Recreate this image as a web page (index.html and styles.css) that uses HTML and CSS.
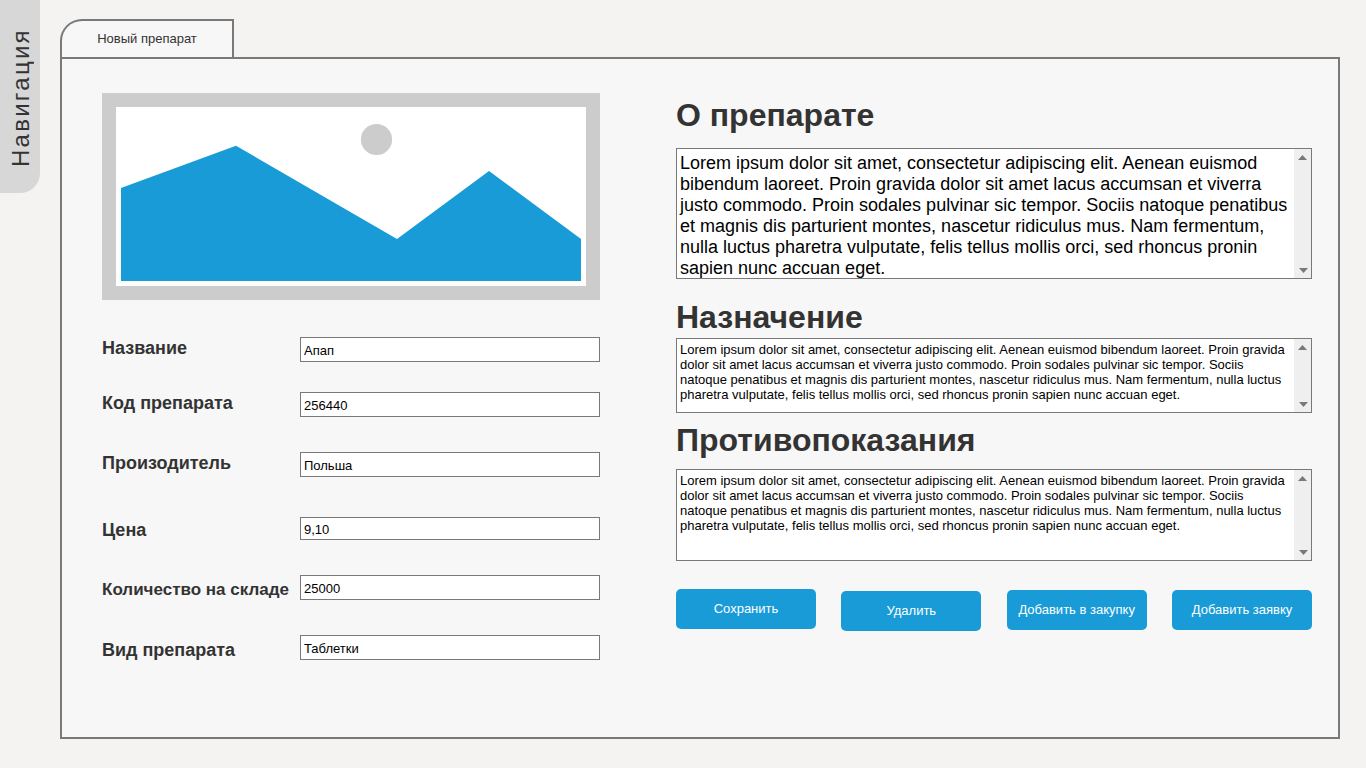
FILE: index.html
```html
<!DOCTYPE html>
<html lang="ru">
<head>
<meta charset="utf-8">
<title>Новый препарат</title>
<link rel="stylesheet" href="styles.css">
</head>
<body>
<div class="app">
  <nav class="side-tab"><span class="side-label">Навигация</span></nav>
  <main class="content">
    <div class="tab">Новый препарат</div>
    <div class="panel">
      <section class="left">
        <svg class="picture" width="498" height="207" viewBox="0 0 498 207">
          <rect width="498" height="207" fill="#ccc"/>
          <rect x="14" y="14" width="470" height="179" fill="#fff"/>
          <circle cx="274.5" cy="46.5" r="15.6" fill="#ccc"/>
          <path d="M19 95L134 52.7L295 146L387 78L479 146V188H19Z" fill="#189bd7"/>
        </svg>
        <div class="row name"><label>Название</label><div class="field">Апап</div></div>
        <div class="row code"><label>Код препарата</label><div class="field">256440</div></div>
        <div class="row maker"><label>Произодитель</label><div class="field">Польша</div></div>
        <div class="row price"><label>Цена</label><div class="field">9,10</div></div>
        <div class="row stock"><label>Количество на складе</label><div class="field">25000</div></div>
        <div class="row kind"><label>Вид препарата</label><div class="field">Таблетки</div></div>
      </section>
      <section class="right">
        <h2 class="h-about">О препарате</h2>
        <div class="area about">
          <p>Lorem ipsum dolor sit amet, consectetur adipiscing elit. Aenean euismod bibendum laoreet. Proin gravida dolor sit amet lacus accumsan et viverra justo commodo. Proin sodales pulvinar sic tempor. Sociis natoque penatibus et magnis dis parturient montes, nascetur ridiculus mus. Nam fermentum, nulla luctus pharetra vulputate, felis tellus mollis orci, sed rhoncus pronin sapien nunc accuan eget.</p>
          <div class="bar"><i class="up"></i><i class="down"></i></div>
        </div>
        <h2 class="h-purpose">Назначение</h2>
        <div class="area purpose">
          <p>Lorem ipsum dolor sit amet, consectetur adipiscing elit. Aenean euismod bibendum laoreet. Proin gravida dolor sit amet lacus accumsan et viverra justo commodo. Proin sodales pulvinar sic tempor. Sociis natoque penatibus et magnis dis parturient montes, nascetur ridiculus mus. Nam fermentum, nulla luctus pharetra vulputate, felis tellus mollis orci, sed rhoncus pronin sapien nunc accuan eget.</p>
          <div class="bar"><i class="up"></i><i class="down"></i></div>
        </div>
        <h2 class="h-contra">Противопоказания</h2>
        <div class="area contra">
          <p>Lorem ipsum dolor sit amet, consectetur adipiscing elit. Aenean euismod bibendum laoreet. Proin gravida dolor sit amet lacus accumsan et viverra justo commodo. Proin sodales pulvinar sic tempor. Sociis natoque penatibus et magnis dis parturient montes, nascetur ridiculus mus. Nam fermentum, nulla luctus pharetra vulputate, felis tellus mollis orci, sed rhoncus pronin sapien nunc accuan eget.</p>
          <div class="bar"><i class="up"></i><i class="down"></i></div>
        </div>
        <div class="actions">
          <button class="btn save">Сохранить</button>
          <button class="btn remove">Удалить</button>
          <button class="btn">Добавить в закупку</button>
          <button class="btn">Добавить заявку</button>
        </div>
      </section>
    </div>
  </main>
</div>
</body>
</html>
```
FILE: styles.css
```css
* { box-sizing: border-box; }
body {
  margin: 0;
  height: 768px;
  overflow: hidden;
  background: #f4f3f1;
  color: #333;
  font: 13px/15px "Liberation Sans", Arial, sans-serif;
}
.app { display: flex; align-items: flex-start; gap: 20px; }
.side-tab {
  width: 40px;
  height: 193px;
  padding: 28px 0 0 7px;
  background: #d7d7d7;
  border-radius: 0 0 20px 0;
}
.side-label {
  display: block;
  writing-mode: vertical-rl;
  transform: rotate(180deg);
  width: 28px;
  height: 139px;
  font-size: 24px;
  line-height: 28px;
  letter-spacing: 2.25px;
  white-space: nowrap;
}
.content { width: 1280px; padding-top: 19px; }
.tab {
  width: 174px;
  height: 38px;
  border: 2px solid #797979;
  border-bottom: 0;
  border-radius: 22px 0 0 0;
  background: #f7f7f7;
  text-align: center;
  line-height: 36px;
}
.panel {
  display: flex;
  gap: 76px;
  height: 682px;
  padding: 34px 26px 0 40px;
  border: 2px solid #797979;
  background: #f7f7f7;
}
.left { width: 498px; }
.picture { display: block; margin-bottom: 37px; }
.row {
  display: grid;
  grid-template-columns: 198px 300px;
  grid-template-rows: 100%;
  height: 25px;
  margin-bottom: 35px;
}
.row label { font-size: 18px; font-weight: bold; line-height: 22px; white-space: nowrap; }
.row.name { margin-bottom: 30px; }
.row.maker { margin-bottom: 40px; }
.row.price { height: 23px; }
.price label { line-height: 26px; }
.row.stock label { font-size: 17px; line-height: 29px; }
.kind label { line-height: 30px; }
.row.price label { line-height: 26px; }
.row.kind label { line-height: 30px; }
.field {
  padding: 0 3px;
  border: 1px solid #797979;
  background: #fff;
  color: #000;
  line-height: 25px;
}
.price .field { line-height: 23px; }
.stock .field, .kind .field { line-height: 25px; }
.right { width: 636px; }
h2 { margin: 0; font-size: 32px; font-weight: bold; line-height: 36px; white-space: nowrap; }
.h-about { margin: 4px 0 15px; }
.h-purpose { margin: 20px 0 3px; }
.h-contra { margin: 9px 0 11px; }
.area {
  display: flex;
  justify-content: space-between;
  border: 1px solid #797979;
  background: #fff;
  color: #000;
}
.area p { width: 614px; margin: 0; padding: 3px 0 0 3px; }
.about { height: 131px; }
.about p { padding-top: 4px; font-size: 18px; line-height: 21px; height: 129px; overflow: hidden; }
.purpose { height: 75px; }
.contra { height: 92px; }
.bar {
  display: flex;
  flex-direction: column;
  justify-content: space-between;
  width: 17px;
  padding: 6px 3px 5px 4px;
  background: #efefef;
}
.up, .down { width: 9px; height: 5px; background: #797979; }
.up { clip-path: polygon(50% 0, 100% 100%, 0 100%); }
.down { margin-left: 1px; clip-path: polygon(0 0, 100% 0, 50% 100%); }
.actions { display: flex; justify-content: space-between; margin-top: 29px; }
.btn {
  width: 140px;
  height: 40px;
  padding: 0 0 2px;
  border: 0;
  border-radius: 5px;
  background: #189bd7;
  color: #fff;
  font: inherit;
}
.save { margin-top: -1px; }
.remove { margin-top: 1px; }
```
